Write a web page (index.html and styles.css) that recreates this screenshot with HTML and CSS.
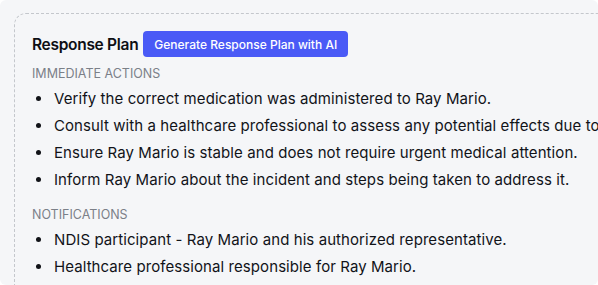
FILE: index.html
```html
<!DOCTYPE html>
<html>
<head>
<meta charset="utf-8">
<link rel="stylesheet" href="styles.css">
</head>
<body>
<div class="page">
  <div class="card">
    <div class="head">
      <h2 class="title">Response Plan</h2>
      <button class="gen">Generate Response Plan with AI</button>
    </div>
    <div class="section">
      <div class="label">IMMEDIATE ACTIONS</div>
      <ul class="items">
        <li>Verify the correct medication was administered to Ray Mario.</li>
        <li>Consult with a healthcare professional to assess any potential effects due to the incorrect dosage.</li>
        <li>Ensure Ray Mario is stable and does not require urgent medical attention.</li>
        <li>Inform Ray Mario about the incident and steps being taken to address it.</li>
      </ul>
    </div>
    <div class="section">
      <div class="label">NOTIFICATIONS</div>
      <ul class="items">
        <li>NDIS participant - Ray Mario and his authorized representative.</li>
        <li>Healthcare professional responsible for Ray Mario.</li>
      </ul>
    </div>
  </div>
</div>
</body>
</html>
```
FILE: styles.css
```css
html, body {
  margin: 0;
  padding: 0;
  background: #ffffff;
}
body {
  font-family: Inter, "Liberation Sans", sans-serif;
  color: #111318;
}
.page {
  width: 598px;
  height: 285px;
  background: #f5f6f8;
  border-radius: 6px;
  overflow: hidden;
  padding: 13px 0 0 14px;
  box-sizing: border-box;
}
.card {
  width: 640px;
  border: 1px dashed #c4c7cc;
  border-radius: 12px;
  padding: 17px 0 20px 17px;
  box-sizing: border-box;
}
.head {
  display: flex;
  align-items: center;
  gap: 5px;
}
.title {
  margin: 0;
  font-size: 15.5px;
  font-weight: 600;
  letter-spacing: -0.3px;
  color: #0d0f14;
}
.gen {
  font-family: inherit;
  font-size: 12px;
  font-weight: 500;
  color: #ffffff;
  background: #4a5af6;
  border: none;
  border-radius: 4px;
  height: 26px;
  padding: 0 11px;
  white-space: nowrap;
}
.section {
  margin-top: 8px;
}
.section + .section {
  margin-top: 13px;
}
.label {
  font-size: 12.5px;
  color: #7b8088;
  line-height: 18px;
}
.items {
  margin: 2px 0 0;
  padding: 0 0 0 21px;
  list-style: disc;
}
.items li {
  font-size: 15px;
  line-height: 27px;
  letter-spacing: 0.08px;
  white-space: nowrap;
  padding-left: 1px;
}
```
